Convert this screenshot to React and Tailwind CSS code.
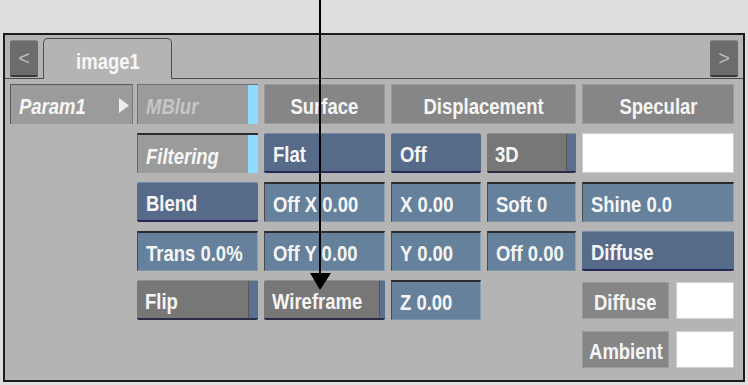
import React from "react";

const font = { fontFamily: "'Liberation Sans', Arial, sans-serif" };

// the UI font is a narrow face; Liberation Sans squeezed to Arial Narrow proportions
const T = ({ children, center }) => (
  <span className={`inline-block whitespace-nowrap scale-x-[0.84] translate-y-[2px] ${center ? "origin-center" : "origin-left"}`}>
    {children}
  </span>
);

const Header = ({ children, className = "" }) => (
  <div className={`flex items-center justify-center bg-[#868686] border border-[#9a9a9a] text-[#f5f5f5] font-bold text-[22px] ${className}`}>
    <T center>{children}</T>
  </div>
);

const DarkBlue = ({ children }) => (
  <div className="flex items-center pl-[9px] bg-[#566b8a] border-t border-t-[#7387a6] border-b-2 border-b-[#262a52] text-[#f5f5f5] font-bold text-[22px] rounded-[2px]">
    <T>{children}</T>
  </div>
);

const Field = ({ children }) => (
  <div className="flex items-center pl-[8px] bg-[#65819b] border-t-2 border-t-[#2c2c2c] border-l border-l-[#4a4a4a] border-r border-r-[#8da0b2] border-b border-b-[#7f93a6] text-[#f5f5f5] font-bold text-[22px]">
    <T>{children}</T>
  </div>
);

const Toggle = ({ children }) => (
  <div className="flex bg-[#777777] border-t border-t-[#8c8c8c] border-b-2 border-b-[#2b2d45] rounded-[2px]">
    <div className="flex-1 flex items-center pl-[8px] text-[#f5f5f5] font-bold text-[22px]">
      <T>{children}</T>
    </div>
    <div className="w-[10px] bg-[#5b6f90] border-l border-l-[#555]" />
  </div>
);

const White = ({ className = "" }) => (
  <div className={`bg-white border border-[#d0d0d0] ${className}`} />
);

const Arrow = ({ dir }) => (
  <div className="mb-[1px] w-[28px] h-[37px] flex items-center justify-center bg-[#6c6c6c] border-t border-t-[#888] border-b-2 border-b-[#3a3a3a] text-[#b9b9b9] text-[20px] rounded-[2px]">
    {dir}
  </div>
);

export default function App() {
  return (
    <div className="relative w-[748px] h-[385px] bg-[#dedede] overflow-hidden" style={font}>
      <div className="ml-[3px] mt-[33px] w-[742px] h-[349px] bg-[#b4b4b4] border-2 border-[#1c1c1c] flex flex-col">
        {/* Tab row */}
        <div className="h-[44px] flex items-end border-b border-b-[#4e4e4e] px-[5px]">
          <Arrow dir="<" />
          <div className="ml-[5px] -mb-[1px] w-[129px] h-[41px] flex items-center justify-center bg-[#b4b4b4] border border-[#4e4e4e] border-b-0 rounded-t-[5px] text-[#f7f7f7] font-bold text-[22px]">
            <T center>image1</T>
          </div>
          <div className="flex-1" />
          <Arrow dir=">" />
        </div>

        {/* Grid */}
        <div className="mt-[5px] ml-[5px] grid grid-cols-[121px_121px_121px_90px_89px_152px] grid-rows-[40px_40px_40px_40px_40px_40px] gap-x-[6px] gap-y-[9px]">
          {/* row 1 */}
          <div className="relative flex items-center pl-[8px] bg-[#9b9b9b] border-t border-l border-[#5a5a5a] border-r border-r-[#777] text-[#f7f7f7] font-bold italic text-[22px] w-[123px]">
            <T>Param1</T>
            <svg className="absolute right-[3px] top-[13px]" width="10" height="15" viewBox="0 0 10 15">
              <path d="M0 0 L10 7.5 L0 15 Z" fill="#eeeeee" />
            </svg>
          </div>
          <div className="flex bg-[#9b9b9b] border-l border-t border-[#707070]">
            <div className="flex-1 flex items-center pl-[8px] text-[#c6c6c6] font-bold italic text-[22px]">
              <T>MBlur</T>
            </div>
            <div className="w-[10px] bg-[#8fdcff]" />
          </div>
          <Header>Surface</Header>
          <Header className="col-span-2">Displacement</Header>
          <Header>Specular</Header>

          {/* row 2 */}
          <div />
          <div className="flex bg-[#9b9b9b] border-t-2 border-t-[#2e2e2e] border-l border-l-[#666]">
            <div className="flex-1 flex items-center pl-[8px] text-[#f7f7f7] font-bold italic text-[22px]">
              <T>Filtering</T>
            </div>
            <div className="w-[10px] bg-[#8fdcff]" />
          </div>
          <DarkBlue>Flat</DarkBlue>
          <DarkBlue>Off</DarkBlue>
          <Toggle>3D</Toggle>
          <White />

          {/* row 3 */}
          <div />
          <DarkBlue>Blend</DarkBlue>
          <Field>Off X 0.00</Field>
          <Field>X 0.00</Field>
          <Field>Soft 0</Field>
          <Field>Shine 0.0</Field>

          {/* row 4 */}
          <div />
          <Field>Trans 0.0%</Field>
          <Field>Off Y 0.00</Field>
          <Field>Y 0.00</Field>
          <Field>Off 0.00</Field>
          <DarkBlue>Diffuse</DarkBlue>

          {/* row 5 */}
          <div />
          <Toggle>Flip</Toggle>
          <Toggle>Wireframe</Toggle>
          <Field>Z 0.00</Field>
          <div />
          <div className="flex gap-[7px] pt-[2px] pb-[1px]">
            <Header className="w-[87px] border-[#8e8e8e]">Diffuse</Header>
            <White className="flex-1" />
          </div>

          {/* row 6 */}
          <div className="col-span-5" />
          <div className="flex gap-[7px] pt-[2px] pb-[1px]">
            <Header className="w-[87px] border-[#8e8e8e]">Ambient</Header>
            <White className="flex-1" />
          </div>
        </div>
      </div>

      {/* callout arrow */}
      <svg className="absolute left-[309px] top-0" width="24" height="292" viewBox="0 0 24 292">
        <line x1="11" y1="0" x2="11" y2="276" stroke="#000" strokeWidth="2" />
        <path d="M1 273 L22 273 L11 290 Z" fill="#000" />
      </svg>
    </div>
  );
}
